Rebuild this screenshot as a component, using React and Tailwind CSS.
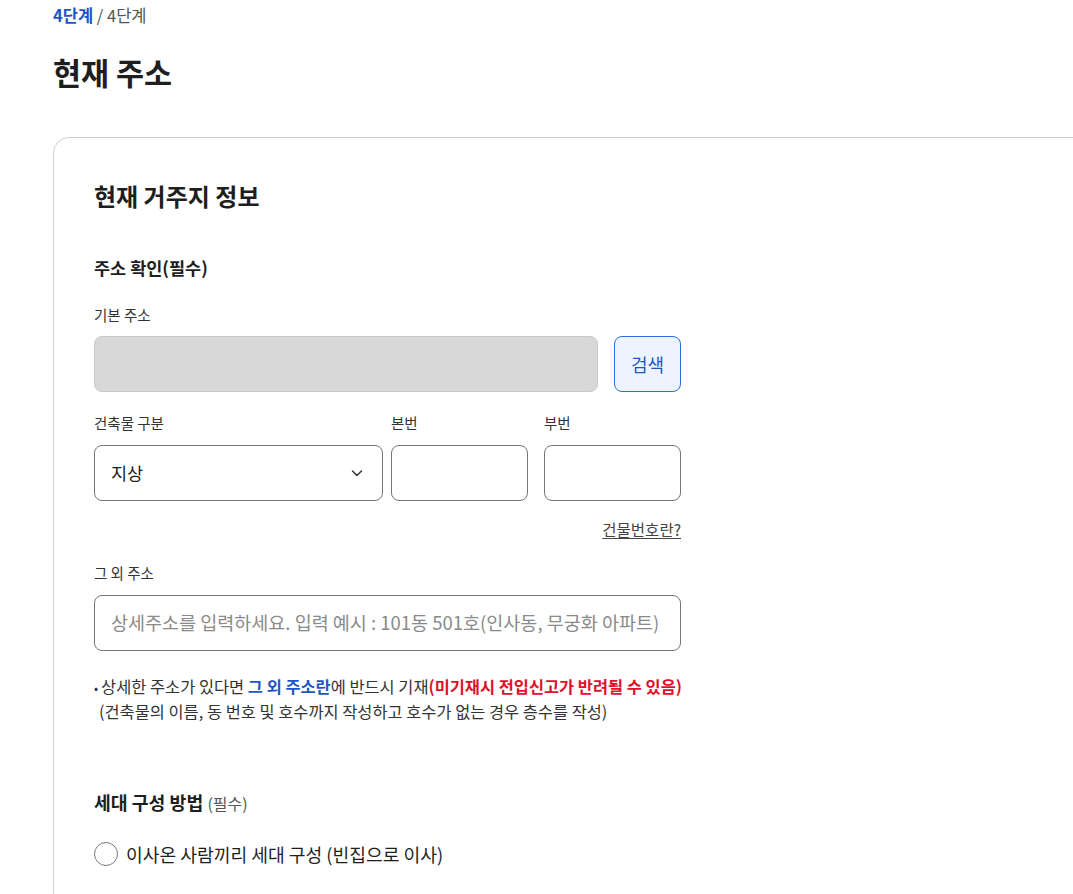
import React from "react";

const font = { fontFamily: '"Noto Sans CJK KR", "Noto Sans", sans-serif' };

export default function App() {
  return (
    <div className="w-full min-h-[894px] overflow-hidden bg-white text-[#1e1e1e]" style={font}>
      <div className="pl-[53px]">
        <div className="pt-[5px] text-[16.5px] leading-[20px]">
          <span className="font-bold text-[#1d56c4]">4단계</span>
          <span className="text-[#555]"> / 4단계</span>
        </div>
        <h1 className="mt-[29px] text-[30.5px] leading-[36px] font-bold text-[#1e1e1e]">현재 주소</h1>
        <div className="mt-[47px] w-[1100px] rounded-[16px] border border-[#cfcfcf] pl-[40px] pt-[43px] pb-[40px]">
          <h2 className="text-[24px] leading-[30px] font-bold">현재 거주지 정보</h2>
          <div className="w-[587px]">
            <h3 className="mt-[45px] text-[17.5px] leading-[24px] font-bold">주소 확인(필수)</h3>

            <div className="mt-[25px] text-[14.5px] leading-[20px] text-[#333]">기본 주소</div>
            <div className="mt-[11px] flex gap-[16px]">
              <div className="h-[56px] flex-1 rounded-[8px] border border-[#c8c8c8] bg-[#d8d8d8]"></div>
              <button className="h-[56px] w-[67px] rounded-[8px] border border-[#2a6fdb] bg-[#eef4ff] text-[18px] text-[#1d56c4]">검색</button>
            </div>

            <div className="mt-[21px] flex">
              <div className="w-[289px]">
                <div className="text-[14.5px] leading-[20px] text-[#333]">건축물 구분</div>
                <div className="mt-[12px] flex h-[56px] items-center justify-between rounded-[8px] border border-[#767676] pl-[16px] pr-[18px]">
                  <span className="text-[17.5px]">지상</span>
                  <svg width="14" height="14" viewBox="0 0 14 14" fill="none">
                    <path d="M2.5 5 L7 9.5 L11.5 5" stroke="#333" strokeWidth="1.5" strokeLinecap="round" strokeLinejoin="round" />
                  </svg>
                </div>
              </div>
              <div className="ml-[8px] w-[137px]">
                <div className="text-[14.5px] leading-[20px] text-[#333]">본번</div>
                <div className="mt-[12px] h-[56px] rounded-[8px] border border-[#767676]"></div>
              </div>
              <div className="ml-[16px] w-[137px]">
                <div className="text-[14.5px] leading-[20px] text-[#333]">부번</div>
                <div className="mt-[12px] h-[56px] rounded-[8px] border border-[#767676]"></div>
              </div>
            </div>

            <div className="mt-[18px] flex justify-end">
              <span className="text-[15.5px] leading-[20px] text-[#444] underline underline-offset-2">건물번호란?</span>
            </div>

            <div className="mt-[24px] text-[14.5px] leading-[20px] text-[#333]">그 외 주소</div>
            <div className="mt-[12px] flex h-[56px] items-center rounded-[8px] border border-[#767676] px-[16px]">
              <span className="text-[18.5px] text-[#8a8a8a] whitespace-nowrap">상세주소를 입력하세요. 입력 예시 : 101동 501호(인사동, 무궁화 아파트)</span>
            </div>

            <div className="mt-[23px] text-[16.4px] leading-[25px] text-[#333] whitespace-nowrap">
              <div className="h-[25px]">
                <span className="text-[12px] leading-[25px] mr-[3px]">•</span>
                <span>상세한 주소가 있다면 </span>
                <span className="font-bold text-[#1d56c4]">그 외 주소란</span>
                <span>에 반드시 기재</span>
                <span className="font-bold text-[#e0102a]">(미기재시 전입신고가 반려될 수 있음)</span>
              </div>
              <div className="h-[25px] pl-[5px]">(건축물의 이름, 동 번호 및 호수까지 작성하고 호수가 없는 경우 층수를 작성)</div>
            </div>

            <h3 className="mt-[66px] text-[18.3px] leading-[24px] font-bold">
              세대 구성 방법 <span className="text-[16px] font-normal text-[#555]">(필수)</span>
            </h3>

            <label className="mt-[25px] flex items-center gap-[8px]">
              <span className="h-[24px] w-[24px] rounded-full border border-[#777] bg-white"></span>
              <span className="text-[18.2px] leading-[28px]">이사온 사람끼리 세대 구성 (빈집으로 이사)</span>
            </label>
          </div>
        </div>
      </div>
    </div>
  );
}
